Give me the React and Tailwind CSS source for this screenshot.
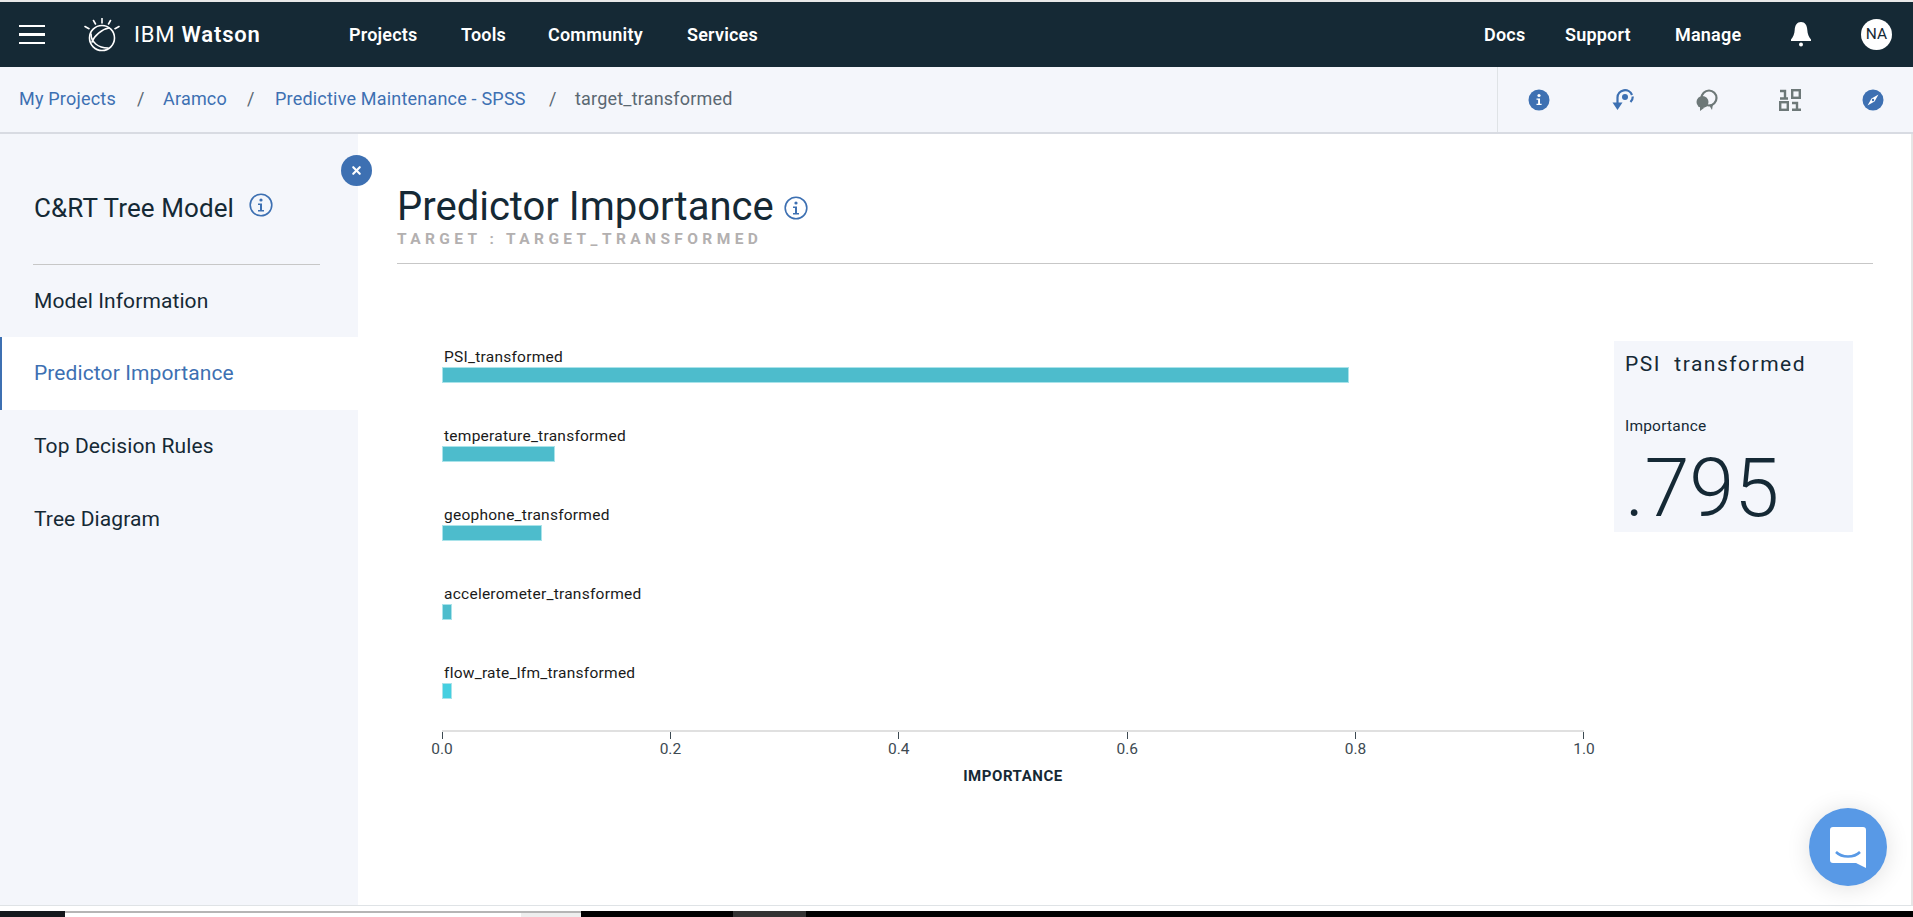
import { X } from 'lucide-react'

const FONT = { fontFamily: 'Roboto, "Noto Sans", sans-serif' }

const bars = [
  { name: 'PSI_transformed', width: 907, color: 'bg-[#4dbccc]' },
  { name: 'temperature_transformed', width: 113, color: 'bg-[#4dbccc]' },
  { name: 'geophone_transformed', width: 100, color: 'bg-[#4dbccc]' },
  { name: 'accelerometer_transformed', width: 10, color: 'bg-[#4dbccc]' },
  { name: 'flow_rate_lfm_transformed', width: 10, color: 'bg-[#45cfe0]' },
]

const ticks = ['0.0', '0.2', '0.4', '0.6', '0.8', '1.0']

function WatsonLogo() {
  return (
    <svg width="36" height="34" viewBox="0 0 36 34" fill="none" stroke="white" strokeWidth="1.6" strokeLinecap="round">
      <path d="M18 0.500v4.500M9.500 2.500l2 3.500M26.500 2.500l-2 3.500M1 8.500l4 2.200M35 8.500l-4 2.200" />
      <circle cx="18" cy="20" r="12.500" />
      <path d="M25 10c-7 1-15 8-17 14M7 16c0 8 7 14 17 14" />
    </svg>
  )
}

function InfoOutline({ size = 24 }) {
  return (
    <svg width={size} height={size} viewBox="0 0 24 24" fill="none">
      <circle cx="12" cy="12" r="10.800" stroke="#3d70b2" strokeWidth="1.600" />
      <circle cx="12" cy="7" r="1.600" fill="#3d70b2" />
      <path d="M9 10.500h4v6.500h2v1.500H9V17h2v-5H9z" fill="#3d70b2" />
    </svg>
  )
}

function ToolIcon({ children }) {
  return (
    <svg width="22" height="22" viewBox="0 0 22 22" fill="none">
      {children}
    </svg>
  )
}

function Toolbar() {
  return (
    <div className="flex w-[416px] items-center border-l border-[#dfe3e6] pl-[30px]">
      <div className="w-[84px]">
        <ToolIcon>
          <circle cx="11" cy="11" r="10.500" fill="#3d70b2" />
          <circle cx="11" cy="6.500" r="1.600" fill="white" />
          <path d="M8.500 9.500h3.500v5.200h1.600V16H8.500v-1.300h1.600v-3.900H8.500z" fill="white" />
        </ToolIcon>
      </div>
      <div className="w-[84px]">
        <ToolIcon>
          <circle cx="13" cy="8" r="3" fill="#3d70b2" />
          <path d="M5.500 14V8.500A7.500 7.500 0 0 1 20 6" stroke="#3d70b2" strokeWidth="2.200" />
          <path d="M20.800 7.500a7.500 7.500 0 0 1-2.300 5.500" stroke="#3d70b2" strokeWidth="2.200" />
          <path d="M0.500 13.500h10L5.500 21z" fill="#3d70b2" />
        </ToolIcon>
      </div>
      <div className="w-[83px]">
        <ToolIcon>
          <circle cx="13" cy="9" r="7.500" stroke="#6d7878" strokeWidth="2.200" />
          <circle cx="6.500" cy="13" r="6" fill="#6d7878" />
          <path d="M4 16v6l4-3zM13 16l3 5 1-6z" fill="#6d7878" />
        </ToolIcon>
      </div>
      <div className="w-[83px]">
        <ToolIcon>
          <path d="M1 2h5v7.500M1 9.500h8" stroke="#6d7878" strokeWidth="2.400" />
          <rect x="13.200" y="1.200" width="7.600" height="7.600" stroke="#6d7878" strokeWidth="2.400" />
          <rect x="1.200" y="13.200" width="7.600" height="7.600" stroke="#6d7878" strokeWidth="2.400" />
          <path d="M13 14h5v7M13 20.800h9" stroke="#6d7878" strokeWidth="2.400" />
        </ToolIcon>
      </div>
      <div>
        <ToolIcon>
          <circle cx="11" cy="11" r="10.500" fill="#3d70b2" />
          <path d="M16.500 5.500 12.500 12.500 5.500 16.500 9.500 9.500z" fill="white" />
          <circle cx="11" cy="11" r="1.200" fill="#3d70b2" />
        </ToolIcon>
      </div>
    </div>
  )
}

function Chart() {
  return (
    <div className="flex w-[1180px] flex-col pl-[45px]">
      {bars.map((bar) => (
        <div key={bar.name} className="flex h-[79px] flex-col">
          <div className="h-[24px] pl-[2px] text-[15.500px] leading-[28px] tracking-[0.25px] text-[#1a1a1a]">{bar.name}</div>
          <div
            className={`h-[16px] border border-[#a9e3ea] ${bar.color}`}
            style={{ width: bar.width }}
          />
        </div>
      ))}
      <div className="mt-[-8px] w-[1142px] border-t-2 border-[#e0e0e0]">
        <div className="flex justify-between">
          {ticks.map((tick) => (
            <div key={tick} className="flex w-0 flex-col items-center">
              <div className="h-[7px] w-px shrink-0 bg-[#3d4a52]" />
              <span className="mt-[2px] text-[15.500px] leading-[16px] text-[#3d4a52]">{tick}</span>
            </div>
          ))}
        </div>
        <div className="mt-[11px] text-center text-[15px] leading-[16px] font-bold tracking-[0.55px] text-[#152935]">IMPORTANCE</div>
      </div>
    </div>
  )
}

export default function App() {
  return (
    <div className="relative flex h-[917px] w-[1913px] flex-col overflow-hidden bg-white" style={FONT}>
      <div className="h-[2px] bg-[#e8e8e8]" />

      {/* Top nav */}
      <header className="flex h-[65px] items-center bg-[#152935] text-white">
        <div className="ml-[19px] flex w-[26px] flex-col gap-[6px]">
          <span className="h-[2.500px] bg-white" />
          <span className="h-[2.500px] bg-white" />
          <span className="h-[2.500px] bg-white" />
        </div>
        <div className="ml-[39px]"><WatsonLogo /></div>
        <div className="ml-[14px] w-[215px] pb-[1px] text-[22px] tracking-[0.8px]">IBM <span className="font-semibold">Watson</span></div>
        <nav className="flex pb-[1px] text-[18px] font-semibold tracking-[0.2px]">
          <a className="w-[112px]">Projects</a>
          <a className="w-[87px]">Tools</a>
          <a className="w-[139px]">Community</a>
          <a className="w-[797px]">Services</a>
          <a className="w-[81px]">Docs</a>
          <a className="w-[110px]">Support</a>
          <a className="w-[116px]">Manage</a>
        </nav>
        <svg width="20" height="25" viewBox="0 0 20 25" fill="white">
          <path d="M10 0c4 0 6 3 6.300 8 .2 4 1.500 7 3.700 9.500V19H0v-1.500C2.200 15 3.500 12 3.700 8 4 3 6 0 10 0z" />
          <circle cx="10" cy="22.500" r="2" />
        </svg>
        <div className="ml-[50px] flex h-[31px] w-[31px] items-center justify-center rounded-full bg-white text-[15.500px] text-[#152935]">NA</div>
      </header>

      {/* Breadcrumb */}
      <div className="flex h-[67px] items-stretch justify-between border-b-2 border-[#d8dbe2] bg-[#f4f6fb] text-[18px] tracking-[0.2px]">
        <div className="flex items-center pb-[2px] pl-[19px] text-[#3d70b2]">
          <a className="w-[118px]">My Projects</a>
          <span className="w-[26px] text-[#5a6872]">/</span>
          <a className="w-[84px]">Aramco</a>
          <span className="w-[28px] text-[#5a6872]">/</span>
          <a className="w-[274px]">Predictive Maintenance - SPSS</a>
          <span className="w-[26px] text-[#5a6872]">/</span>
          <span className="text-[#5a6872]">target_transformed</span>
        </div>
        <Toolbar />
      </div>

      {/* Body */}
      <div className="flex min-h-0 flex-1 border-r-2 border-[#e6e6e6]">
        <aside className="relative w-[358px] shrink-0 bg-[#f4f6fb]">
          <button className="absolute top-[21px] right-[-14px] flex h-[31px] w-[31px] items-center justify-center rounded-full bg-[#3d70b2] text-white">
            <X size={13} strokeWidth={4} />
          </button>
          <div className="flex h-[130px] items-end px-[34px] pb-[40px]">
            <div className="flex items-center">
              <span className="text-[26px] leading-[32px] tracking-[0.1px] text-[#152935]">C&amp;RT Tree Model</span>
              <span className="mb-[6px] ml-[15px]"><InfoOutline /></span>
            </div>
          </div>
          <div className="mx-[33px] w-[287px] border-t border-[#c7c7c7]" />
          <div className="flex h-[72px] items-center pt-[2px] pl-[34px] text-[21px] tracking-[0.1px] text-[#152935]">Model Information</div>
          <div className="flex h-[73px] items-center border-l-2 border-[#3d70b2] bg-white pt-[1px] pl-[32px] text-[21px] tracking-[0.1px] text-[#3d70b2]">Predictor Importance</div>
          <div className="flex h-[72px] items-center pt-[2px] pl-[34px] text-[21px] tracking-[0.1px] text-[#152935]">Top Decision Rules</div>
          <div className="flex h-[73px] items-center pt-[2px] pl-[34px] text-[21px] tracking-[0.1px] text-[#152935]">Tree Diagram</div>
        </aside>

        <main className="min-w-0 flex-1 pl-[39px]">
          <div className="mt-[49px] flex h-[48px] items-center">
            <h1 className="text-[40px] leading-[48px] text-[#152935]">Predictor Importance</h1>
            <span className="mt-[2px] ml-[10px]"><InfoOutline /></span>
          </div>
          <div className="mt-[-1px] text-[15.500px] leading-[18px] font-bold tracking-[4.400px] text-[#b3b0b0]">TARGET : TARGET_TRANSFORMED</div>
          <div className="mt-[15px] w-[1476px] border-t border-[#c7c7c7]" />

          <div className="flex">
            <div className="mt-[79px]"><Chart /></div>
            <section className="mt-[77px] ml-[37px] h-[191px] w-[239px] bg-[#f4f6fb] pl-[11px] text-[#152935]">
              <div className="mt-[10px] text-[21px] leading-[26px] tracking-[1.500px] whitespace-pre">PSI  transformed</div>
              <div className="mt-[39px] text-[15.500px] leading-[20px] tracking-[0.2px]">Importance</div>
              <div className="mt-[8px] text-[81px] leading-[90px] font-light">.795</div>
            </section>
          </div>
        </main>
      </div>

      <div className="h-[6px] border-t border-[#dfe3e6] bg-white" />

      {/* Bottom edge of the window behind */}
      <div className="flex h-[6px] shrink-0 bg-black">
        <div className="w-[65px] bg-[#14181c]" />
        <div className="w-[456px] border-t-2 border-[#b5b5b5] bg-white" />
        <div className="w-[60px] border-t-2 border-[#b5b5b5] bg-[#eeeeee]" />
        <div className="ml-[152px] w-[73px] bg-[#333333]" />
      </div>

      {/* Chat bubble */}
      <button className="absolute top-[808px] left-[1809px] flex h-[78px] w-[78px] items-center justify-center rounded-full bg-[#5899e6] shadow-[0_2px_24px_rgba(0,0,0,0.12)]">
        <svg width="36" height="41" viewBox="0 0 36 41">
          <path d="M3 0h30a3 3 0 0 1 3 3v38l-10-5H3a3 3 0 0 1-3-3V3a3 3 0 0 1 3-3z" fill="white" />
          <path d="M6 25c6 6 18 6 24 0" fill="none" stroke="#5899e6" strokeWidth="2.500" />
        </svg>
      </button>
    </div>
  )
}
